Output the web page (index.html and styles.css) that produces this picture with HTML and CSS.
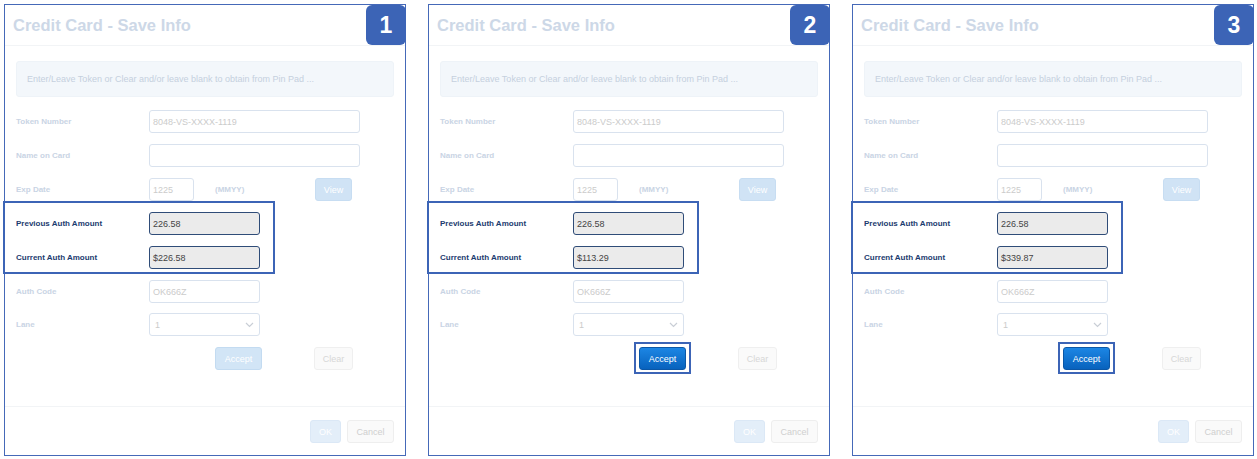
FILE: index.html
```html
<!DOCTYPE html>
<html>
<head>
<meta charset="utf-8">
<link rel="stylesheet" href="styles.css">
</head>
<body>
<div class="stage">

  <section class="panel">
    <div class="badge">1</div>
    <header class="head"><h1 class="title">Credit Card - Save Info</h1></header>
    <div class="body">
      <div class="info">Enter/Leave Token or Clear and/or leave blank to obtain from Pin Pad ...</div>
      <div class="row first"><span class="lbl">Token Number</span><div class="inp w-lg">8048-VS-XXXX-1119</div></div>
      <div class="row"><span class="lbl">Name on Card</span><div class="inp w-lg"></div></div>
      <div class="row"><span class="lbl">Exp Date</span><div class="inp w-sm">1225</div><span class="fmt">(MMYY)</span><span class="btn btn-view">View</span></div>
      <div class="hl">
        <div class="row"><span class="lbl lbl-on">Previous Auth Amount</span><div class="inp w-md inp-on">226.58</div></div>
        <div class="row"><span class="lbl lbl-on">Current Auth Amount</span><div class="inp w-md inp-on">$226.58</div></div>
      </div>
      <div class="row"><span class="lbl">Auth Code</span><div class="inp w-md">OK666Z</div></div>
      <div class="row lane"><span class="lbl">Lane</span><div class="inp w-md sel"><span>1</span><svg width="9" height="6" viewBox="0 0 9 6"><path d="M1 1l3.5 3.5L8 1" fill="none" stroke="#c9ced6" stroke-width="1.2"/></svg></div></div>
      <div class="row actions"><span class="btn btn-accept">Accept</span><span class="btn btn-clear">Clear</span></div>
    </div>
    <footer class="foot"><span class="btn btn-ok">OK</span><span class="btn btn-cancel">Cancel</span></footer>
  </section>

  <section class="panel">
    <div class="badge">2</div>
    <header class="head"><h1 class="title">Credit Card - Save Info</h1></header>
    <div class="body">
      <div class="info">Enter/Leave Token or Clear and/or leave blank to obtain from Pin Pad ...</div>
      <div class="row first"><span class="lbl">Token Number</span><div class="inp w-lg">8048-VS-XXXX-1119</div></div>
      <div class="row"><span class="lbl">Name on Card</span><div class="inp w-lg"></div></div>
      <div class="row"><span class="lbl">Exp Date</span><div class="inp w-sm">1225</div><span class="fmt">(MMYY)</span><span class="btn btn-view">View</span></div>
      <div class="hl">
        <div class="row"><span class="lbl lbl-on">Previous Auth Amount</span><div class="inp w-md inp-on">226.58</div></div>
        <div class="row"><span class="lbl lbl-on">Current Auth Amount</span><div class="inp w-md inp-on">$113.29</div></div>
      </div>
      <div class="row"><span class="lbl">Auth Code</span><div class="inp w-md">OK666Z</div></div>
      <div class="row lane"><span class="lbl">Lane</span><div class="inp w-md sel"><span>1</span><svg width="9" height="6" viewBox="0 0 9 6"><path d="M1 1l3.5 3.5L8 1" fill="none" stroke="#c9ced6" stroke-width="1.2"/></svg></div></div>
      <div class="row actions"><span class="btn btn-accept on">Accept</span><span class="btn btn-clear">Clear</span></div>
    </div>
    <footer class="foot"><span class="btn btn-ok">OK</span><span class="btn btn-cancel">Cancel</span></footer>
  </section>

  <section class="panel">
    <div class="badge">3</div>
    <header class="head"><h1 class="title">Credit Card - Save Info</h1></header>
    <div class="body">
      <div class="info">Enter/Leave Token or Clear and/or leave blank to obtain from Pin Pad ...</div>
      <div class="row first"><span class="lbl">Token Number</span><div class="inp w-lg">8048-VS-XXXX-1119</div></div>
      <div class="row"><span class="lbl">Name on Card</span><div class="inp w-lg"></div></div>
      <div class="row"><span class="lbl">Exp Date</span><div class="inp w-sm">1225</div><span class="fmt">(MMYY)</span><span class="btn btn-view">View</span></div>
      <div class="hl">
        <div class="row"><span class="lbl lbl-on">Previous Auth Amount</span><div class="inp w-md inp-on">226.58</div></div>
        <div class="row"><span class="lbl lbl-on">Current Auth Amount</span><div class="inp w-md inp-on">$339.87</div></div>
      </div>
      <div class="row"><span class="lbl">Auth Code</span><div class="inp w-md">OK666Z</div></div>
      <div class="row lane"><span class="lbl">Lane</span><div class="inp w-md sel"><span>1</span><svg width="9" height="6" viewBox="0 0 9 6"><path d="M1 1l3.5 3.5L8 1" fill="none" stroke="#c9ced6" stroke-width="1.2"/></svg></div></div>
      <div class="row actions"><span class="btn btn-accept on">Accept</span><span class="btn btn-clear">Clear</span></div>
    </div>
    <footer class="foot"><span class="btn btn-ok">OK</span><span class="btn btn-cancel">Cancel</span></footer>
  </section>

</div>
</body>
</html>
```
FILE: styles.css
```css
* { box-sizing: border-box; }
html, body { margin: 0; padding: 0; background: #ffffff; }
body { font-family: "Liberation Sans", Arial, Helvetica, sans-serif; }

.stage {
  display: flex;
  gap: 22px;
  padding: 4px 0 0 4px;
}

.panel {
  position: relative;
  width: 402px;
  height: 452px;
  border: 1px solid #4569b8;
  display: flex;
  flex-direction: column;
  background: #fff;
}

.badge {
  position: absolute;
  top: 0;
  right: -1px;
  width: 40px;
  height: 40px;
  border-radius: 6px;
  background: #3c64b6;
  color: #fff;
  font-weight: bold;
  font-size: 23px;
  line-height: 40px;
  text-align: center;
}

.head {
  height: 41px;
  border-bottom: 1px solid #f2f4f6;
  padding: 0 0 0 8px;
  display: flex;
  align-items: center;
}
.title {
  margin: 0;
  font-size: 16.5px;
  font-weight: bold;
  color: #cdd8e7;
}

.body {
  flex: 1;
  padding: 15px 11px 0 11px;
}

.info {
  height: 36px;
  background: #f3f7fb;
  border: 1px solid #eef3f8;
  border-radius: 3px;
  font-size: 9px;
  color: #c5d0de;
  padding-left: 10px;
  display: flex;
  align-items: center;
}

.row {
  display: flex;
  align-items: center;
  height: 23px;
  margin-top: 11px;
}
.row.first { margin-top: 13px; }
.row.lane { margin-top: 10px; }

.lbl {
  width: 133px;
  flex: none;
  font-size: 8px;
  font-weight: bold;
  color: #c9d4e4;
}
.lbl-on { color: #1c3b6f; }

.inp {
  height: 23px;
  border: 1px solid #d9e2ee;
  border-radius: 3px;
  background: #fff;
  font-size: 9px;
  color: #cbcbcb;
  padding-left: 3px;
  display: flex;
  align-items: center;
  flex: none;
}
.w-lg { width: 211px; }
.w-md { width: 111px; }
.w-sm { width: 45px; }

.inp-on {
  background: #ebebeb;
  border-color: #2f4c78;
  color: #444;
}

.sel {
  justify-content: space-between;
  padding: 0 5px 0 5px;
}

.fmt {
  margin-left: 21px;
  width: 100px;
  font-size: 8px;
  font-weight: bold;
  color: #c9d4e4;
}

.btn {
  display: inline-flex;
  align-items: center;
  justify-content: center;
  height: 23px;
  border-radius: 3px;
  font-size: 9px;
  border: 1px solid transparent;
  flex: none;
}
.btn-view { width: 37px; background: #d0e3f5; color: #fff; border-color: #c7ddf2; }

.hl { position: relative; }
.hl::before {
  content: "";
  position: absolute;
  left: -13px;
  right: 119px;
  top: -11px;
  bottom: -5px;
  border: 2px solid #3c64b6;
  pointer-events: none;
}

.actions { padding-left: 199px; }
.btn-accept {
  position: relative;
  width: 47px;
  background: #d2e5f6;
  border-color: #c3dbf1;
  color: #fff;
}
.btn-accept.on {
  background: linear-gradient(#1c86e4, #0862bd);
  border-color: #0b57a6;
}
.btn-accept.on::after {
  content: "";
  position: absolute;
  left: -6px;
  right: -6px;
  top: -6px;
  bottom: -5px;
  border: 2px solid #3c64b6;
}
.btn-clear {
  width: 39px;
  margin-left: 52px;
  background: #fafafa;
  border-color: #efefef;
  color: #d7d7d7;
}

.foot {
  height: 49px;
  border-top: 1px solid #f2f4f6;
  display: flex;
  justify-content: flex-end;
  align-items: flex-start;
  gap: 6px;
  padding: 13px 11px 0 0;
}
.btn-ok {
  width: 31px;
  background: #e3eef9;
  border-color: #dbe8f6;
  color: #fff;
}
.btn-cancel {
  width: 47px;
  background: #fafafa;
  border-color: #eeeeee;
  color: #cfcfcf;
}
```
